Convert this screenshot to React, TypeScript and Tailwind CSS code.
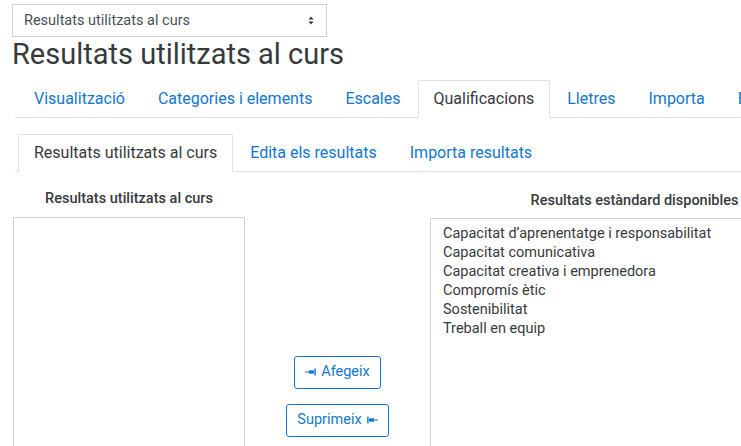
import React from 'react'

const blue = 'text-[#1177d1]'

const mainTabs = [
  'Visualització',
  'Categories i elements',
  'Escales',
  'Qualificacions',
  'Lletres',
  'Importa',
  'Exporta',
]

const subTabs = ['Resultats utilitzats al curs', 'Edita els resultats', 'Importa resultats']

const standard = [
  'Capacitat d’aprenentatge i responsabilitat',
  'Capacitat comunicativa',
  'Capacitat creativa i emprenedora',
  'Compromís ètic',
  'Sostenibilitat',
  'Treball en equip',
]

function Tabs({ items, active }: { items: string[]; active: string }) {
  return (
    <div className="flex flex-nowrap border-b border-[#dee2e6] pl-[3px]">
      {items.map((t) => (
        <div
          key={t}
          className={
            t === active
              ? '-mb-px mr-px shrink-0 whitespace-nowrap rounded-t-[2px] border border-[#dee2e6] border-b-white bg-white px-[15px] py-[7px] text-[16px] leading-[22px] text-[#373a3c]'
              : `-mb-px mr-px shrink-0 whitespace-nowrap border border-transparent px-[15px] py-[7px] text-[16px] leading-[22px] ${blue}`
          }
        >
          {t}
        </div>
      ))}
    </div>
  )
}

function ArrowIcon({ flip }: { flip?: boolean }) {
  return (
    <svg width="11" height="8" viewBox="0 0 11 8" className={flip ? 'scale-x-[-1]' : ''}>
      <rect x="0" y="3.5" width="5" height="1" fill="#1177d1" />
      <path d="M4 2.2 L9 2.6 L9 5.4 L4 5.8 Z" fill="#1177d1" />
      <rect x="9.4" y="0.5" width="1.4" height="7" fill="#1177d1" />
    </svg>
  )
}

export default function App() {
  return (
    <div
      className="h-[446px] w-[741px] overflow-hidden bg-white pl-[12px] pt-[4px] text-[#373a3c]"
      style={{ fontFamily: 'Roboto, "Noto Sans", sans-serif' }}
    >
      {/* select */}
      <div className="flex h-[33px] w-[315px] items-center justify-between border border-[#ced4da] bg-white pl-[11px] pr-[12px] text-[14.5px] text-[#495057]">
        <span>Resultats utilitzats al curs</span>
        <svg width="6" height="9" viewBox="0 0 6 9">
          <path d="M3 0.5 L5.6 3.6 L0.4 3.6 Z" fill="#343a40" />
          <path d="M3 8.5 L5.6 5.4 L0.4 5.4 Z" fill="#343a40" />
        </svg>
      </div>

      <h2 className="text-[29px] font-normal leading-[1.2]">Resultats utilitzats al curs</h2>

      <div className="ml-[3px] mt-[8px] w-[900px]">
        <Tabs items={mainTabs} active="Qualificacions" />
        <div className="mt-[16px]">
          <Tabs items={subTabs} active="Resultats utilitzats al curs" />
        </div>

        {/* outcomes table */}
        <div className="ml-[-2px] mt-[16px] flex">
          <div className="flex w-[232px] flex-col">
            <div className="text-center text-[14.5px] font-medium leading-[22px]">
              Resultats utilitzats al curs
            </div>
            <div className="mt-[7px] h-[358px] border border-[#ced4da]" />
          </div>

          <div className="flex w-[185px] flex-col items-center justify-end gap-[15px] pb-[139px]">
            <button className={`flex h-[33px] items-center gap-[5px] rounded-[3px] border border-[#1177d1] px-[10px] text-[14.5px] ${blue}`}>
              <ArrowIcon />
              <span>Afegeix</span>
            </button>
            <button className={`flex h-[33px] items-center gap-[5px] rounded-[3px] border border-[#1177d1] px-[10px] text-[14.5px] ${blue}`}>
              <span>Suprimeix</span>
              <ArrowIcon flip />
            </button>
          </div>

          <div className="flex w-[409px] shrink-0 flex-col">
            <div className="pt-[2px] text-center text-[14.5px] font-medium leading-[22px]">
              Resultats estàndard disponibles
            </div>
            <div className="mt-[6px] h-[358px] border border-[#ced4da] pl-[12px] pt-[5px] text-[14.5px] leading-[19px]">
              {standard.map((s) => (
                <div key={s}>{s}</div>
              ))}
            </div>
          </div>
        </div>
      </div>
    </div>
  )
}
